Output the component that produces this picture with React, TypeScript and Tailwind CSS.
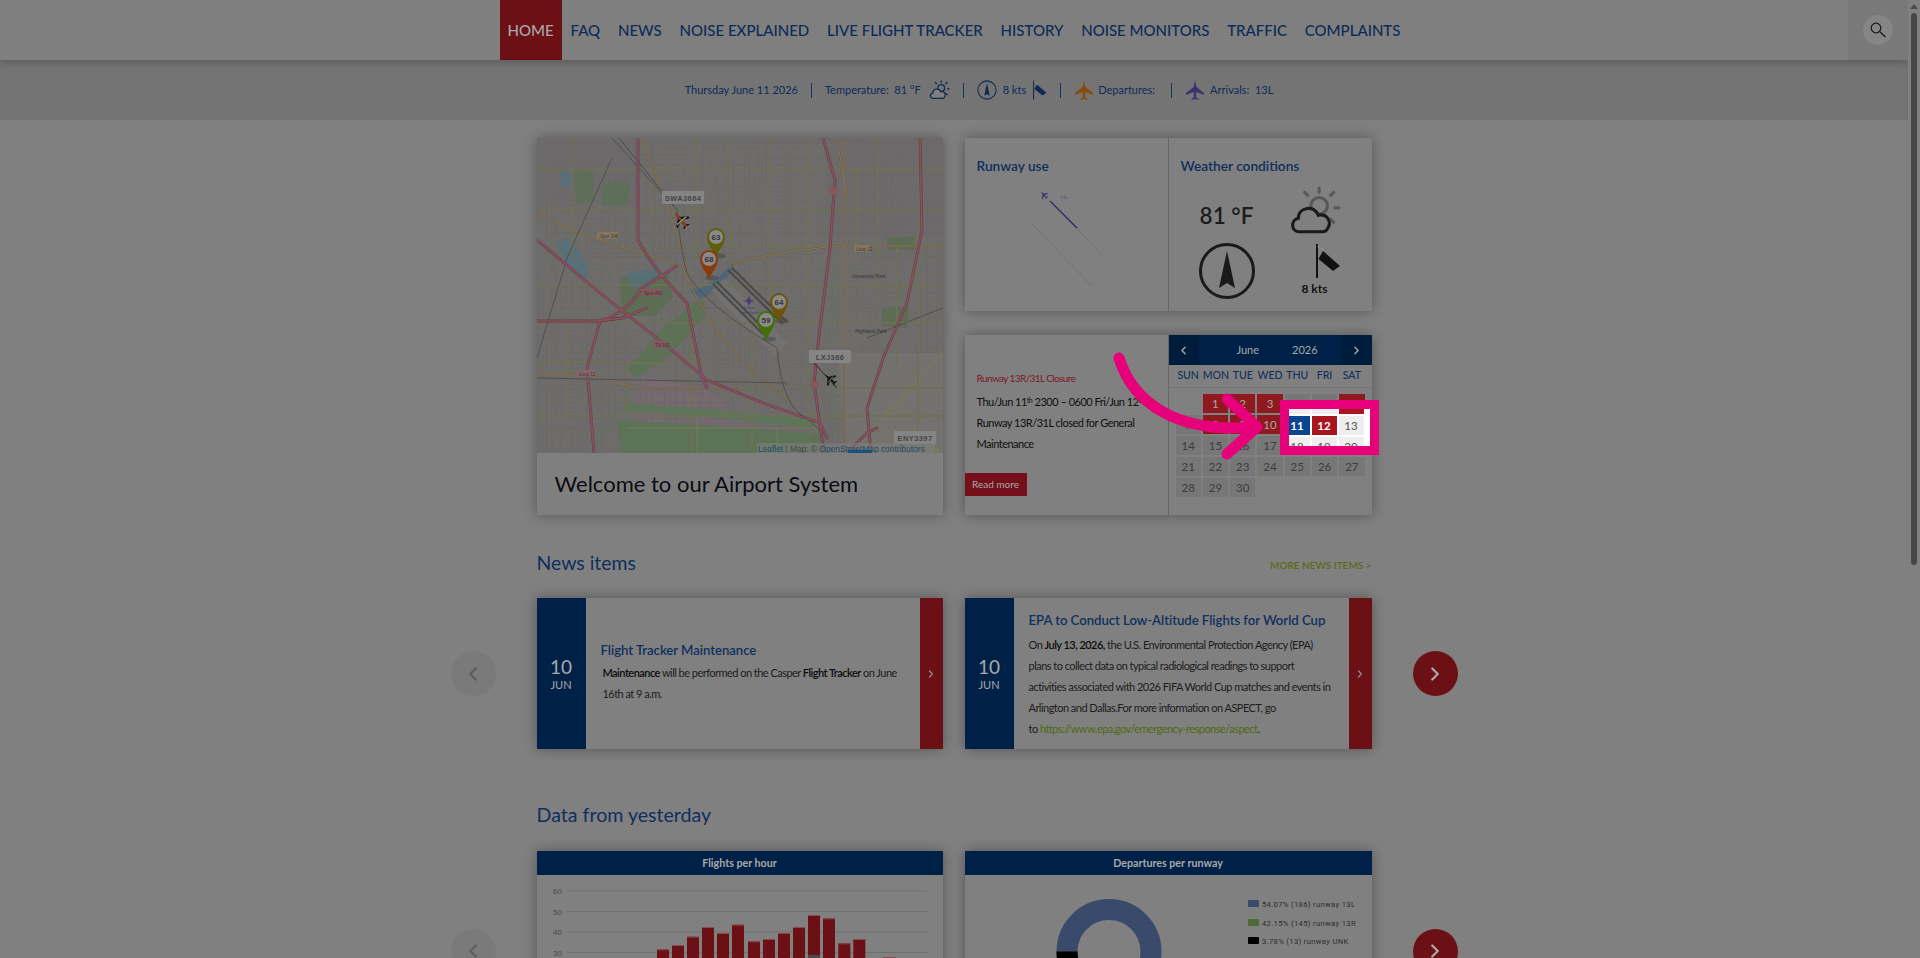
import React from 'react';
import { ChevronLeft, ChevronRight } from 'lucide-react';

const NAV_ITEMS = ['FAQ', 'NEWS', 'NOISE EXPLAINED', 'LIVE FLIGHT TRACKER', 'HISTORY', 'NOISE MONITORS', 'TRAFFIC', 'COMPLAINTS'];
const WEEK_DAYS = ['SUN', 'MON', 'TUE', 'WED', 'THU', 'FRI', 'SAT'];
const EVENT_DAYS = [1, 2, 3, 6, 8, 9, 10, 12];
const BARS = [[651, 508], [696, 495], [741, 470], [786, 441], [831, 459], [876, 434], [924, 484], [969, 477], [1014, 459], [1059, 441], [1104, 405], [1149, 415], [1195, 490], [1240, 477], [1330, 531]];

const PINK_ROADS = 'M101 0 V102 Q115 130 150 165 L165 240 L170 250 M286 0 L298 42 L293 110 L283 190 L277 245 L287 315 M383 0 L385 92 L370 165 L347 218 L330 270 L334 315 M0 102 L63 155 L126 205 L170 242 L226 265 L283 285 L290 300 M0 183 H63 L85 180 L110 170 M63 183 L50 230 L57 315 M63 183 Q90 175 105 150 L140 128 M310 315 L330 295 L340 290';
const ORANGE_ROADS = 'M0 75 Q45 100 105 115 L145 128 M195 125 Q240 115 265 112 L300 108 H406 M0 235 H40 L100 250 H200 M105 0 Q130 60 150 130 M300 0 L310 60 M307 0 V315 M145 128 Q175 205 250 262';
const YELLOW_ROADS = 'M0 32 H406 M0 72 H406 M100 108 H406 M0 147 H406 M0 185 H406 M0 225 H170 M160 250 H406 M0 278 H406 M160 0 V120 M193 0 V130 M233 0 V165 M273 0 V315 M340 0 V170 M381 0 V315 M155 185 V315 M35 0 V120 M115 32 V100 M320 32 V108 M360 108 V225 M215 190 V315 M30 185 V278 M90 225 V278';

// little repeatable random so the street grid stays the same every run
let seed = 7;
const rnd = () => {
  seed = (seed * 9301 + 49297) % 233280;
  return seed / 233280;
};

const streets: { x1: number; y1: number; x2: number; y2: number }[] = [];
for (let x = 2; x < 406; x += 3 + rnd() * 4) {
  let y = rnd() * 30;
  while (y < 315) {
    const len = 12 + rnd() * 55;
    if (rnd() > 0.25) streets.push({ x1: x, y1: y, x2: x, y2: y + len });
    y += len + 3;
  }
}
for (let y = 2; y < 315; y += 3 + rnd() * 4) {
  let x = rnd() * 30;
  while (x < 406) {
    const len = 12 + rnd() * 60;
    if (rnd() > 0.25) streets.push({ x1: x, y1: y, x2: x + len, y2: y });
    x += len + 3;
  }
}

const downtown: number[] = [];
for (let k = -110; k < 120; k += 6) downtown.push(k);

const Pin = ({ x, y, n, color }: { x: number; y: number; n: number; color: string }) => (
  <g transform={`translate(${x} ${y})`}>
    <ellipse cx="3" cy="19" rx="7" ry="2.5" fill="#4a4a4a" opacity="0.6" />
    <path d="M0 20 C-3 13 -9 7 -9 0 A9 9 0 1 1 9 0 C9 7 3 13 0 20 Z" fill={color} />
    <circle cx="0" cy="0" r="7" fill="#8a8a8a" />
    <text x="0" y="3" textAnchor="middle" fontSize="8" fontWeight="700" fill="#333" fontFamily="Liberation Sans, sans-serif">{n}</text>
  </g>
);

const MapLabel = ({ x, y, w, text }: { x: number; y: number; w: number; text: string }) => (
  <g>
    <rect x={x} y={y} width={w} height="13" rx="1" fill="#858585" />
    <text x={x + w / 2} y={y + 9.5} textAnchor="middle" fontSize="7.5" fontWeight="700" letterSpacing="0.4" fill="#444" fontFamily="Liberation Sans, sans-serif">{text}</text>
  </g>
);

const Plane = ({ color }: { color: string }) => (
  <path d="M0 -9 L1.3 -3 L8 2 L8 4 L1.3 1.5 L1 6 L3.5 8 L3.5 9 L0 8 L-3.5 9 L-3.5 8 L-1 6 L-1.3 1.5 L-8 4 L-8 2 L-1.3 -3 Z" fill={color} />
);

const MapPicture = () => (
  <svg width="406" height="315" viewBox="0 0 406 315" className="block">
    <rect width="406" height="315" fill="#6f6d6c" />
    <path d="M0 0 H100 V70 L0 60 Z M290 0 H406 V100 H290 Z" fill="#6d6a6c" />
    <path d="M100 240 L170 250 L230 300 L100 290 Z" fill="#786a70" />
    {streets.map((s, i) => (
      <line key={i} {...s} stroke="#5d5c5b" strokeWidth="0.8" />
    ))}
    {streets.map((s, i) => (
      <line key={i} {...s} stroke="#858381" strokeWidth="0.35" />
    ))}
    {/* diagonal downtown blocks bottom right */}
    <path d="M300 215 L406 215 L406 315 L310 315 Z" fill="#727070" />
    <g stroke="#7c7d60" strokeWidth="0.6">
      {downtown.map((k) => (
        <g key={k}>
          <line x1={Math.max(350 + k - 55, 300)} y1={Math.max(265 - 50 + (k < -5 ? -k - 5 : 0), 215)} x2={406} y2={Math.min(265 - k + 56, 315)} opacity="0.75" />
          <line x1={406} y1={Math.max(215 + k + 60, 215)} x2={Math.max(330 + k * 0.2, 310)} y2={315} opacity="0.55" />
        </g>
      ))}
    </g>
    {/* parks, river and other areas sit over the street mesh */}
    <path d="M36 32 L56 32 L58 62 L40 66 Z M66 45 L93 45 L90 68 L64 68 Z" fill="#5f6e58" />
    <path d="M83 140 L130 135 L136 160 L118 178 L85 178 Z" fill="#5d6c54" />
    <path d="M125 190 L165 160 L170 175 L135 215 L100 240 L90 232 Z" fill="#5c7156" />
    <path d="M90 265 L180 272 L280 282 L285 290 L180 280 L85 272 Z" fill="#5d7558" />
    <path d="M80 282 L180 288 L285 296 L290 315 L85 315 Z" fill="#5c7358" />
    <path d="M160 280 V315 M240 290 V315 M90 290 H280" stroke="#7b7c58" strokeWidth="0.9" />
    <path d="M350 100 L378 98 L378 112 L350 112 Z M345 170 L372 168 L370 190 L345 188 Z" fill="#5e6c56" />
    <path d="M30 100 Q55 125 50 140 L35 135 L18 105 Z M90 135 L125 130 L112 150 L92 150 Z M22 32 L36 30 L34 50 L24 48 Z" fill="#55707c" opacity="0.8" />
    <path d="M155 150 Q170 155 195 125 L197 130 Q180 155 165 160 Q150 155 155 150 Z" fill="#4d6778" />
    <path d="M188 140 L250 205 L238 218 L174 153 Z" fill="#727170" />
    <g fill="none" strokeLinecap="round" strokeLinejoin="round">
      <path d={YELLOW_ROADS} stroke="#666650" strokeWidth="1.5" />
      <path d={YELLOW_ROADS} stroke="#7c7d5a" strokeWidth="0.8" />
      <path d={ORANGE_ROADS} stroke="#6a5a44" strokeWidth="1.8" />
      <path d={ORANGE_ROADS} stroke="#8a7958" strokeWidth="1" />
      <path d="M75 0 L140 72 Q143 110 150 135 Q165 165 240 210 Q245 270 270 280 L290 300 M0 240 L250 245 M0 220 L30 120 L75 20 M330 200 L406 170" stroke="#4e4d4c" strokeWidth="0.9" />
      <path d={PINK_ROADS} stroke="#663b46" strokeWidth="2.8" />
      <path d={PINK_ROADS} stroke="#8a5060" strokeWidth="1.7" />
    </g>
    <g stroke="#4b4a49" strokeWidth="2.2" fill="none">
      <path d="M191 132 L246 186 M195 130 L250 184" />
      <path d="M176 146 L226 196 M180 144 L230 194" />
    </g>
    <path d="M212 158 L214 162 L218 163 L214 164 L212 168 L210 164 L206 163 L210 162 Z" fill="#4d3c78" />
    <text x="212" y="171" textAnchor="middle" fontSize="4" fill="#3c3c6a" fontFamily="Liberation Sans, sans-serif">Dallas</text>
    <text x="212" y="176" textAnchor="middle" fontSize="4" fill="#3c3c6a" fontFamily="Liberation Sans, sans-serif">Love Field</text>
    <text x="332" y="140" textAnchor="middle" fontSize="5" fill="#333" fontFamily="Liberation Sans, sans-serif">University Park</text>
    <text x="334" y="195" textAnchor="middle" fontSize="5" fill="#333" fontFamily="Liberation Sans, sans-serif">Highland Park</text>
    <g fontSize="4.5" fill="#3a3a3a" fontFamily="Liberation Sans, sans-serif">
      <rect x="60" y="94" width="22" height="7" fill="#85755e" />
      <text x="63" y="99.5">Spur 348</text>
      <rect x="105" y="151" width="20" height="7" fill="#85585e" />
      <text x="107" y="156.5">Spur 482</text>
      <rect x="40" y="232" width="18" height="7" fill="#85656a" />
      <text x="42" y="237.5">Loop 12</text>
      <rect x="317" y="107" width="16" height="7" fill="#85755e" />
      <text x="319" y="112.5">Loop 12</text>
      <rect x="292" y="50" width="9" height="6" fill="#85585e" />
      <rect x="273" y="244" width="9" height="6" fill="#85585e" />
      <rect x="116" y="203" width="15" height="7" fill="#85585e" />
      <text x="118" y="208.5">TX 183</text>
    </g>
    <Pin x={179} y={99} n={63} color="#5f5e08" />
    <Pin x={172} y={121} n={68} color="#8a3b0d" />
    <Pin x={242} y={164} n={64} color="#6e5408" />
    <Pin x={229} y={182} n={59} color="#417006" />
    <path d="M82 0 L137 68" stroke="#4a494e" strokeWidth="0.9" />
    <path d="M277 225 L300 250" stroke="#222" strokeWidth="0.9" />
    <g transform="translate(144 82) rotate(-40)">
      <Plane color="#111" />
      <path d="M0 -8 L0 8" stroke="#8f3f12" strokeWidth="2.4" />
      <path d="M-6 1 L6 1" stroke="#8a8a8a" strokeWidth="1.4" />
    </g>
    <g transform="translate(293 241) rotate(-50) scale(0.8)">
      <Plane color="#111" />
      <path d="M-5 1 L5 1" stroke="#8a8a8a" strokeWidth="1" />
    </g>
    <MapLabel x={125} y={53} w={42} text="SWA3664" />
    <MapLabel x={272} y={212} w={42} text="LXJ366" />
    <MapLabel x={357} y={293} w={42} text="ENY3397" />
    <rect x="220" y="305" width="178" height="10" fill="#808080" opacity="0.55" />
    <text x="221" y="314" fontSize="8.4" fill="#444" fontFamily="Liberation Sans, sans-serif">
      <tspan fill="#1d4c66">Leaflet</tspan> | Map: © <tspan fill="#1d4c66">OpenStreetMap contributors</tspan>
    </text>
    <rect x="311" y="312" width="24" height="3" fill="#14527f" />
  </svg>
);

const SunCloud = ({ size, color, sun }: { size: number; color: string; sun: string }) => (
  <svg width={size} height={size * 0.92} viewBox="0 0 50 46" fill="none">
    <g stroke={sun} strokeWidth="3" strokeLinecap="round">
      <path d="M29 2 V6 M15 6 L18 9 M43 6 L40 9 M48 21 H44 M40 32 L43 35" />
      <circle cx="29" cy="19" r="8" />
    </g>
    <path d="M10 44 C2 44 1 33 9 31 C9 20 25 18 28 28 C38 26 41 36 37 41 Q36 44 32 44 Z" fill="#7f7f7f" stroke={color} strokeWidth="3" />
  </svg>
);

const CompassIcon = ({ size, color }: { size: number; color: string }) => (
  <svg width={size} height={size} viewBox="0 0 58 58">
    <circle cx="29" cy="29" r="26.5" fill="none" stroke={color} strokeWidth="3" />
    <path d="M29 9 L37 46 L29 41 L21 46 Z" fill={color} />
  </svg>
);

const WindSock = ({ w, h, color }: { w: number; h: number; color: string }) => (
  <svg width={w} height={h} viewBox="0 0 25 34">
    <path d="M1 0 V34" stroke={color} strokeWidth="2" />
    <path d="M1 2 L8 6" stroke="#999" strokeWidth="0.7" />
    <path d="M7 7 L24 22 L17 27 L2.5 15 Z" fill={color} />
  </svg>
);

const TopPlane = ({ color }: { color: string }) => (
  <svg width="20" height="20" viewBox="-10 -10 20 20">
    <path d="M0 -10 L1.4 -3 L9 3 L9 5 L1.4 2 L1 7 L3.6 9 L3.6 10 L0 9 L-3.6 10 L-3.6 9 L-1 7 L-1.4 2 L-9 5 L-9 3 L-1.4 -3 Z" fill={color} />
  </svg>
);

const Sep = () => <span className="h-[15px] w-px bg-[#1a3560]" />;

const DateCol = () => (
  <div className="flex w-[49px] shrink-0 flex-col items-center justify-center bg-[#002147] text-[#a9a9a9]">
    <span className="text-[19px] leading-[22px]">10</span>
    <span className="text-[11px] leading-[14px]">JUN</span>
  </div>
);

const NewsCard = ({ title, children }: { title: string; children: React.ReactNode }) => (
  <div className="flex h-[151px] bg-[#808080] shadow-[0_0_12px_rgba(0,0,0,0.35)]">
    <DateCol />
    <div className="flex min-w-0 flex-1 flex-col justify-center pl-[15px] pr-[16px]">
      <h3 className="whitespace-nowrap text-[13.2px] font-semibold leading-[24px] tracking-[-0.05px] text-[#0f2f5e]">{title}</h3>
      <div className="text-[11px] leading-[21px] tracking-[-0.53px] text-[#1c1c1c]">{children}</div>
    </div>
    <div className="flex w-[23px] shrink-0 items-center justify-center bg-[#6b1015] text-[#a08a8a]">
      <ChevronRight size={12} strokeWidth={2.5} />
    </div>
  </div>
);

const CarouselRow = ({ children }: { children: React.ReactNode }) => (
  <div className="flex w-[1007px] items-center justify-between">
    <div className="flex h-[45px] w-[45px] shrink-0 items-center justify-center rounded-full bg-[#7a7a7a] text-[#5e5e5e]">
      <ChevronLeft size={22} strokeWidth={2.5} />
    </div>
    <div className="grid w-[835px] shrink-0 grid-cols-[406px_407px] gap-x-[22px]">{children}</div>
    <div className="flex h-[45px] w-[45px] shrink-0 items-center justify-center rounded-full bg-[#6b1015] text-[#a9a9a9]">
      <ChevronRight size={22} strokeWidth={2.5} />
    </div>
  </div>
);

const DayCell = ({ d, lit = false }: { d: number | null; lit?: boolean }) => {
  if (d === null) return <div className="h-[19px]" />;
  const isEvent = EVENT_DAYS.includes(d);
  const bg = lit
    ? d === 11 ? 'bg-[#0a4590] text-white font-bold' : isEvent ? 'bg-[#a8171e] text-white font-bold' : 'bg-[#eeeeee] text-[#555555]'
    : isEvent ? 'bg-[#8f191e] text-[#a9a9a9]' : 'bg-[#777777] text-[#3c3c3c]';
  return <div className={`flex h-[19px] items-center justify-center text-[11.5px] ${bg}`}>{d}</div>;
};

const Calendar = () => {
  const cells: (number | null)[] = [null];
  for (let d = 1; d <= 30; d++) cells.push(d);
  return (
    <div className="flex-1 border-l border-[#666666]">
      <div className="flex h-[30px] items-center justify-between bg-[#002147] text-[#a9a9a9]">
        <div className="flex h-full w-[30px] items-center justify-center bg-[#001c3c]"><ChevronLeft size={13} strokeWidth={2.5} /></div>
        <div className="flex gap-[33px] pl-[14px] text-[11px]"><span>June</span><span>2026</span></div>
        <div className="flex h-full w-[30px] items-center justify-center bg-[#001c3c]"><ChevronRight size={13} strokeWidth={2.5} /></div>
      </div>
      <div className="grid h-[23px] grid-cols-7 items-center gap-x-[2px] border-b border-[#777777] px-[7px] text-center text-[10.5px] font-medium text-[#0f2f5e]">
        {WEEK_DAYS.map((w) => <span key={w}>{w}</span>)}
      </div>
      <div className="grid grid-cols-7 gap-[2px] pl-[7px] pr-[7px] pt-[6px]">
        {cells.map((d, i) => <DayCell key={i} d={d} />)}
      </div>
    </div>
  );
};

const Spotlight = () => (
  <div className="absolute left-[315px] top-[65px] h-[55px] w-[99px] overflow-hidden border-[9px] border-[#e6007a] bg-white">
    <div className="-ml-[4px] -mt-[14px] grid grid-cols-[25px_25px_25px] gap-[2px]">
      {[4, 5, 6, 11, 12, 13, 18, 19, 20].map((d) => <DayCell key={d} d={d} lit />)}
    </div>
  </div>
);

const PinkArrow = () => (
  <svg width="170" height="120" viewBox="0 0 170 120" fill="none" className="absolute left-[140px] top-[15px]">
    <path d="M14 8 C28 53 72 84 150 77" stroke="#e6007a" strokeWidth="11" strokeLinecap="round" />
    <path d="M122 49 L152 77 L122 104" stroke="#e6007a" strokeWidth="11" strokeLinecap="round" strokeLinejoin="round" />
  </svg>
);

const BarChart = () => (
  <svg width="406" height="100" viewBox="0 0 406 100" className="block">
    {[60, 50, 40, 30].map((v, i) => (
      <g key={v}>
        <line x1="30" x2="390" y1={16 + i * 20.5} y2={16 + i * 20.5} stroke="#707070" />
        <text x="25" y={19 + i * 20.5} textAnchor="end" fontSize="8" fill="#4a4a4a" fontFamily="Liberation Sans, sans-serif">{v}</text>
      </g>
    ))}
    {BARS.map(([zx, zy]) => {
      const x = zx / 3 + 440 - 537;
      const y = zy / 3 - 95;
      return (
        <g key={zx}>
          <rect x={x} y={y} width="12" height={100 - y} fill="#6b1015" />
          <rect x={x} y={y} width="12" height="1" fill="#8a4a4e" />
        </g>
      );
    })}
    <rect x={1104 / 3 - 97} y={525 / 3 - 95} width="12" height="20" fill="#4a4a4a" />
  </svg>
);

const Donut = () => (
  <svg width="406" height="100" viewBox="0 0 406 100" className="block">
    <circle cx="144" cy="76.5" r="42" fill="none" stroke="#3a4a6b" strokeWidth="21" />
    <circle cx="144" cy="76.5" r="42" fill="none" stroke="#000" strokeWidth="21" strokeDasharray="10 254" transform="rotate(180 144 76.5) scale(1 -1) translate(0 -153)" />
    {[
      { c: '#3a4a6b', t: '54.07% (186) runway 13L', y: 29 },
      { c: '#4d6b33', t: '42.15% (145) runway 13R', y: 48 },
      { c: '#000000', t: '3.78% (13) runway UNK', y: 66 },
    ].map((l) => (
      <g key={l.t}>
        <rect x="283" y={l.y - 4} width="11" height="7" rx="1" fill={l.c} />
        <text x="297" y={l.y + 3} fontSize="7.6" letterSpacing="0.35" fill="#2c2c2c" fontFamily="Roboto, sans-serif">{l.t}</text>
      </g>
    ))}
  </svg>
);

export default function App() {
  return (
    <div className="flex h-[958px] overflow-hidden bg-[#808080] font-['Lato',sans-serif]">
      <div className="flex h-full min-w-0 flex-1 flex-col items-center overflow-hidden">
        {/* Top nav */}
        <nav className="relative z-10 flex h-[60px] w-full shrink-0 items-center justify-between bg-[#7f7f7f] shadow-[0_2px_8px_rgba(0,0,0,0.25)]">
          <div className="flex h-full flex-1 justify-center pl-[61px]">
            <div className="flex h-full items-center text-[15px] font-medium text-[#0d2b57]">
              <a className="flex h-full w-[62px] items-center justify-center bg-[#6b1015] text-[#a9a9a9]">HOME</a>
              {NAV_ITEMS.map((n) => <a key={n} className="px-[8.9px]">{n}</a>)}
            </div>
          </div>
          <div className="flex h-full w-[60px] items-center justify-center bg-[#797979]">
            <div className="flex h-[30px] w-[30px] items-center justify-center rounded-full bg-[#858585]">
              <svg width="18" height="18" viewBox="0 0 18 18" fill="none" stroke="#1c1c1c" strokeWidth="1.3">
                <circle cx="7" cy="7" r="4.8" />
                <path d="M10.5 10.5 L16.5 16" />
              </svg>
            </div>
          </div>
        </nav>

        {/* Status strip */}
        <div className="flex h-[60px] w-full shrink-0 items-center justify-center gap-[13px] bg-[#747474] pl-[50px] text-[11px] text-[#0d2b57]">
          <span>Thursday June 11 2026</span>
          <Sep />
          <span>Temperature:&nbsp; 81 °F</span>
          <span className="-ml-[5px]"><SunCloud size={21} color="#0d2b57" sun="#0d2b57" /></span>
          <Sep />
          <CompassIcon size={20} color="#0d2b57" />
          <span className="-ml-[7px]">8 kts</span>
          <span className="-ml-[6px]"><WindSock w={14} h={20} color="#0d2b57" /></span>
          <Sep />
          <TopPlane color="#8a4a0e" />
          <span className="-ml-[9px] mr-[3px]">Departures:</span>
          <Sep />
          <TopPlane color="#3f3270" />
          <span className="-ml-[8px]">Arrivals:&nbsp; 13L</span>
        </div>

        <main className="flex w-full flex-col items-center">
          {/* Map, weather, calendar */}
          <section className="mt-[18px] grid w-[835px] grid-cols-[406px_407px] gap-x-[22px]">
            <div className="h-[377px] bg-[#7f7f7f] shadow-[0_0_12px_rgba(0,0,0,0.35)]">
              <MapPicture />
              <h2 className="flex h-[60px] items-center pl-[18px] text-[22px] text-[#0c0c14]">Welcome to our Airport System</h2>
            </div>
            <div className="flex flex-col gap-[24px]">
              <div className="flex h-[173px] bg-[#808080] shadow-[0_0_12px_rgba(0,0,0,0.35)]">
                <div className="w-[203px] pl-[12px] pt-[18px]">
                  <h3 className="text-[13.7px] font-semibold leading-[20px] text-[#0f2f5e]">Runway use</h3>
                  <svg width="100" height="110" viewBox="0 0 100 110" className="ml-[50px] mt-[5px]">
                    <path d="M4 42 L64 104" stroke="#6d6d6d" strokeWidth="0.8" />
                    <path d="M23 20 L76 75" stroke="#6d6d6d" strokeWidth="0.8" />
                    <path d="M23 20 L50 47" stroke="#2e2a6a" strokeWidth="1.2" />
                    <g transform="translate(17 14) rotate(-45) scale(0.5)"><Plane color="#3f3270" /></g>
                    <text x="33" y="18" fontSize="5" fill="#4a3f7a" fontFamily="Liberation Serif, serif">13L</text>
                  </svg>
                </div>
                <div className="flex-1 border-l border-[#666666] pl-[12px] pt-[18px]">
                  <h3 className="text-[13.7px] font-semibold leading-[20px] text-[#0f2f5e]">Weather conditions</h3>
                  <div className="mt-[10px] grid grid-cols-[92px_84px]">
                    <div className="flex h-[50px] items-center justify-center pt-[10px] text-[22.5px] font-semibold text-[#1c1c1c]">81 °F</div>
                    <div className="flex h-[50px] items-start justify-center"><SunCloud size={52} color="#1a1a1a" sun="#585858" /></div>
                    <div className="flex justify-center pt-[6px]"><CompassIcon size={58} color="#1a1a1a" /></div>
                    <div className="flex flex-col items-center pt-[8px]">
                      <span className="ml-[28px]"><WindSock w={25} h={34} color="#111111" /></span>
                      <span className="text-[12px] font-bold leading-[22px] text-[#111]">8 kts</span>
                    </div>
                  </div>
                </div>
              </div>
              <div className="relative flex h-[180px] bg-[#808080] shadow-[0_0_12px_rgba(0,0,0,0.35)]">
                <div className="flex w-[203px] shrink-0 flex-col pt-[33px]">
                  <div className="pl-[12px] leading-[21px]">
                    <div className="mb-[2px] text-[10px] tracking-[-0.6px] text-[#7a1a1e]">Runway 13R/31L Closure</div>
                    <div className="whitespace-nowrap text-[11px] tracking-[-0.5px] text-[#0f0f0f]">Thu/Jun 11<sup className="text-[7px] leading-none">th</sup> 2300 – 0600 Fri/Jun 12<sup className="text-[7px] leading-none">th</sup></div>
                    <div className="w-[165px] text-[11px] tracking-[-0.5px] text-[#0f0f0f]">Runway 13R/31L closed for General Maintenance</div>
                  </div>
                  <a className="mt-[19px] flex h-[23px] w-[62px] items-center justify-center bg-[#75101a] text-[10px] text-[#a9a9a9]">Read more</a>
                </div>
                <Calendar />
                <Spotlight />
                <PinkArrow />
              </div>
            </div>
          </section>

          {/* News */}
          <div className="mb-[23px] mt-[36px] flex h-[24px] w-[835px] items-center justify-between">
            <h2 className="text-[19.4px] text-[#0f2f5e]">News items</h2>
            <a className="pt-[4px] text-[10px] font-semibold text-[#5c6a18]">MORE NEWS ITEMS &gt;</a>
          </div>
          <CarouselRow>
            <NewsCard title="Flight Tracker Maintenance">
              <p className="mb-[6px] pl-[2px]"><strong className="font-semibold text-[#0c0c0c]">Maintenance</strong> will be performed on the Casper <strong className="font-semibold text-[#0c0c0c]">Flight Tracker</strong> on June 16th at 9 a.m.</p>
            </NewsCard>
            <NewsCard title="EPA to Conduct Low-Altitude Flights for World Cup">
              <p className="mt-[2px]">On <strong className="font-semibold text-[#0c0c0c]">July 13, 2026,</strong> the U.S. Environmental Protection Agency (EPA) plans to collect data on typical radiological readings to support activities associated with 2026 FIFA World Cup matches and events in Arlington and Dallas.For more information on ASPECT, go to&nbsp;<a className="text-[#4f6a10]">https://www.epa.gov/emergency-response/aspect</a>.</p>
            </NewsCard>
          </CarouselRow>

          {/* Data */}
          <div className="mb-[24px] mt-[54px] flex h-[24px] w-[835px] items-center">
            <h2 className="text-[19.6px] text-[#0f2f5e]">Data from yesterday</h2>
          </div>
          <CarouselRow>
            <div className="h-[200px] bg-[#808080] shadow-[0_0_12px_rgba(0,0,0,0.35)]">
              <div className="flex h-[24px] items-center justify-center bg-[#002147] text-[10.7px] font-bold text-[#a9a9a9]">Flights per hour</div>
              <BarChart />
            </div>
            <div className="h-[200px] bg-[#808080] shadow-[0_0_12px_rgba(0,0,0,0.35)]">
              <div className="flex h-[24px] items-center justify-center bg-[#002147] text-[10.7px] font-bold text-[#a9a9a9]">Departures per runway</div>
              <Donut />
            </div>
          </CarouselRow>
        </main>
      </div>

      {/* Scrollbar */}
      <div className="flex h-full w-[12px] shrink-0 flex-col items-center bg-[#808080] pt-[4px]">
        <div className="h-0 w-0 border-x-[4px] border-b-[5px] border-x-transparent border-b-[#4a4a4a]" />
        <div className="mt-[4px] h-[552px] w-[6px] rounded-full bg-[#474747]" />
      </div>
    </div>
  );
}
